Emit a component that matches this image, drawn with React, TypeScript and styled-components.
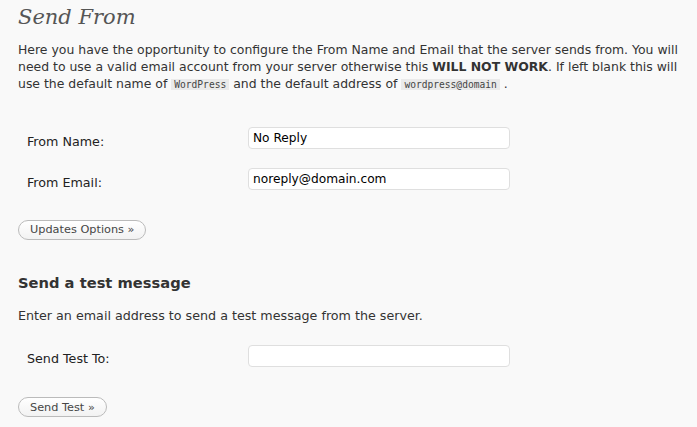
import React from "react";
import styled, { createGlobalStyle } from "styled-components";

const GlobalStyle = createGlobalStyle`
  html, body {
    margin: 0;
    padding: 0;
    background: #f9f9f9;
  }
  body {
    font-family: "DejaVu Sans", Verdana, sans-serif;
    color: #333;
  }
`;

type FieldRow = {
  label: string;
  value: string;
};

const fromFields: FieldRow[] = [
  { label: "From Name:", value: "No Reply" },
  { label: "From Email:", value: "noreply@domain.com" },
];

export default function App() {
  return (
    <>
      <GlobalStyle />
      <Page>
        <PageTitle>Send From</PageTitle>
        <Intro>
          Here you have the opportunity to configure the From Name and Email that the server sends
          from. You will need to use a valid email account from your server otherwise this{" "}
          <strong>WILL NOT WORK</strong>. If left blank this will use the default name of{" "}
          <Code>WordPress</Code> and the default address of <Code>wordpress@domain</Code> .
        </Intro>

        <FormTable $top={35}>
          {fromFields.map((f) => (
            <FormRow key={f.label}>
              <FieldLabel>{f.label}</FieldLabel>
              <TextInput type="text" defaultValue={f.value} />
            </FormRow>
          ))}
        </FormTable>

        <ButtonRow $top={28}>
          <PillButton>Updates Options »</PillButton>
        </ButtonRow>

        <SubTitle>Send a test message</SubTitle>
        <Note>Enter an email address to send a test message from the server.</Note>

        <FormTable $top={21}>
          <FormRow>
            <FieldLabel>Send Test To:</FieldLabel>
            <TextInput type="text" defaultValue="" />
          </FormRow>
        </FormTable>

        <ButtonRow $top={29}>
          <PillButton>Send Test »</PillButton>
        </ButtonRow>
      </Page>
    </>
  );
}

const Page = styled.div`
  padding: 0 0 0 18px;
`;

const PageTitle = styled.h2`
  margin: 0;
  padding-top: 3px;
  font-family: Georgia, "DejaVu Serif", serif;
  font-style: italic;
  font-weight: normal;
  font-size: 21px;
  line-height: 28px;
  color: #555;
`;

const Intro = styled.p`
  margin: 10px 0 0;
  max-width: 676px;
  font-size: 12.45px;
  line-height: 17px;
  color: #333;
`;

const Code = styled.code`
  font-family: "DejaVu Sans Mono", monospace;
  font-size: 9.6px;
  line-height: 13px;
  background: #eaeaea;
  padding: 0 3px;
  color: #444;
`;

const FormTable = styled.div<{ $top: number }>`
  display: flex;
  flex-direction: column;
  gap: 19px;
  margin-top: ${(p) => p.$top}px;
`;

const FormRow = styled.div`
  display: grid;
  grid-template-columns: 230px 262px;
  align-items: center;
`;

const FieldLabel = styled.label`
  padding: 6px 0 0 9px;
  font-size: 12.7px;
  color: #222;
`;

const TextInput = styled.input`
  box-sizing: border-box;
  width: 262px;
  height: 22px;
  padding: 1px 4px;
  border: 1px solid #dfdfdf;
  border-radius: 4px;
  background: #fff;
  font-family: "DejaVu Sans", Verdana, sans-serif;
  font-size: 12.2px;
  color: #000;
  outline: none;
`;

const ButtonRow = styled.div<{ $top: number }>`
  margin-top: ${(p) => p.$top}px;
`;

const PillButton = styled.button`
  box-sizing: border-box;
  height: 20px;
  padding: 0 11px;
  border: 1px solid #bbb;
  border-radius: 11px;
  background: linear-gradient(#ffffff, #f2f2f2);
  font-family: "DejaVu Sans", Verdana, sans-serif;
  font-size: 11.3px;
  color: #464646;
  cursor: pointer;
`;

const SubTitle = styled.h3`
  margin: 34px 0 0;
  font-size: 14.7px;
  line-height: 17px;
  font-weight: bold;
  color: #333;
`;

const Note = styled.p`
  margin: 16px 0 0;
  font-size: 12.7px;
  line-height: 17px;
`;
